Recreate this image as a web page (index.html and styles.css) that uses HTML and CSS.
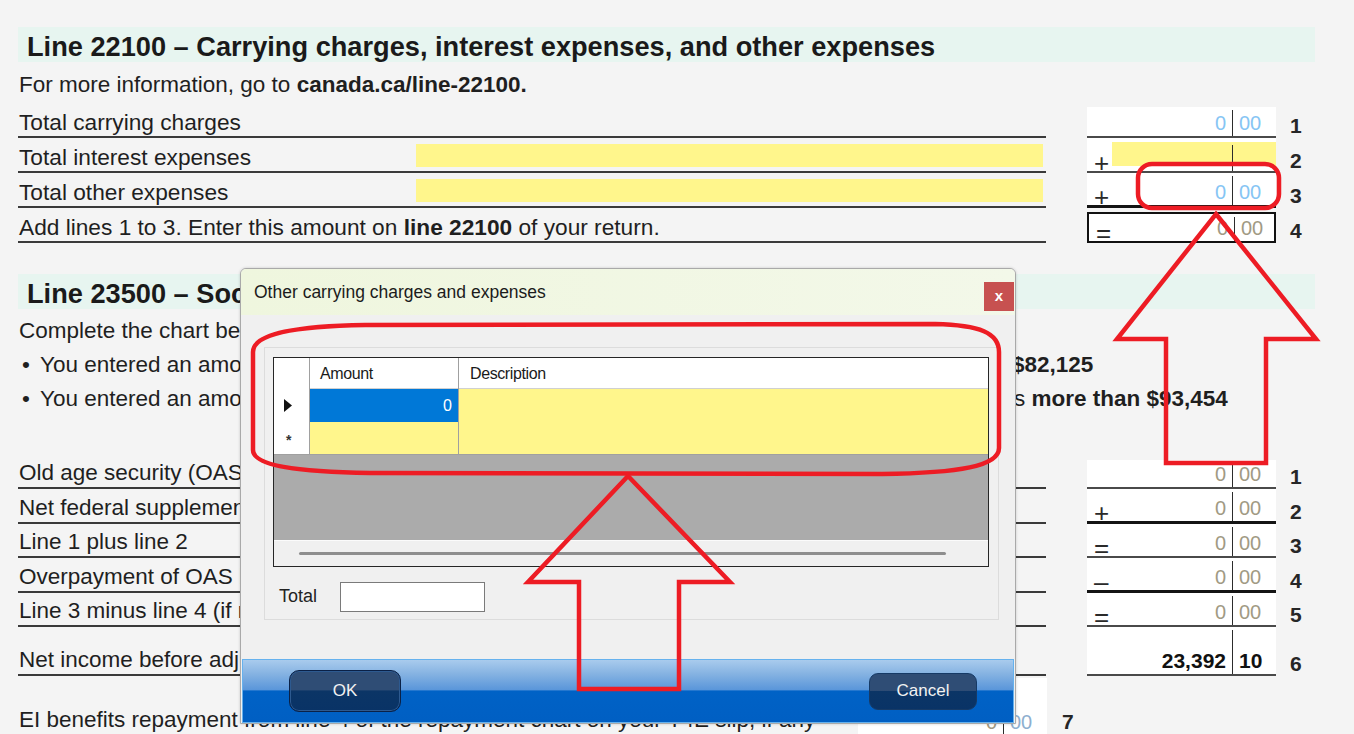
FILE: index.html
```html
<!DOCTYPE html>
<html lang="en">
<head>
<meta charset="utf-8">
<title>Line 22100</title>
<link rel="stylesheet" href="styles.css">
</head>
<body>
<main class="form">
  <section class="sec s1">
    <h2 class="band">Line 22100 – Carrying charges, interest expenses, and other expenses</h2>
    <p class="info">For more information, go to <b>canada.ca/line-22100.</b></p>

    <div class="row">
      <div class="lbl">Total carrying charges</div>
      <div class="amt top4"><span class="op"></span><span class="fld"><span class="dol blue">0</span><span class="sep"></span><span class="cts blue">00</span></span></div>
      <div class="num">1</div>
    </div>
    <div class="row">
      <div class="lbl">Total interest expenses<span class="yel"></span></div>
      <div class="amt"><span class="op">+</span><span class="fld yfld"><span class="dol"></span><span class="sep"></span><span class="cts"></span></span></div>
      <div class="num">2</div>
    </div>
    <div class="row">
      <div class="lbl">Total other expenses<span class="yel"></span></div>
      <div class="amt thick"><span class="op">+</span><span class="fld"><span class="dol blue">0</span><span class="sep"></span><span class="cts blue">00</span></span></div>
      <div class="num">3</div>
    </div>
    <div class="row">
      <div class="lbl">Add lines 1 to 3. Enter this amount on&nbsp;<b>line 22100</b>&nbsp;of your return.</div>
      <div class="amt boxed"><span class="op">=</span><span class="fld"><span class="dol tan">0</span><span class="sep"></span><span class="cts tan">00</span></span></div>
      <div class="num">4</div>
    </div>
  </section>

  <section class="sec s2">
    <h2 class="band">Line 23500 – Social benefits repayment</h2>
    <p class="lead">Complete the chart below if one of the following applies:</p>
    <div class="bul"><span class="dot">•</span><span class="bt w1">You entered an amount on line 11300 or line 14600, and your net income on line 23400 is more than</span><b>$82,125</b></div>
    <div class="bul"><span class="dot">•</span><span class="bt w2">You entered an amount on line 11900, and your net income on line 23400</span><span>is&nbsp;<b>more than $93,454</b></span></div>

    <div class="rows2">
      <div class="row r2">
        <div class="lbl">Old age security (OAS) pension from line 11300</div>
        <div class="amt top5"><span class="op"></span><span class="fld"><span class="dol tan">0</span><span class="sep"></span><span class="cts tan">00</span></span></div>
        <div class="num">1</div>
      </div>
      <div class="row r2">
        <div class="lbl">Net federal supplements paid from line 14600</div>
        <div class="amt thick"><span class="op">+</span><span class="fld"><span class="dol tan">0</span><span class="sep"></span><span class="cts tan">00</span></span></div>
        <div class="num">2</div>
      </div>
      <div class="row r2">
        <div class="lbl">Line 1 plus line 2</div>
        <div class="amt"><span class="op">=</span><span class="fld"><span class="dol tan">0</span><span class="sep"></span><span class="cts tan">00</span></span></div>
        <div class="num">3</div>
      </div>
      <div class="row r2">
        <div class="lbl">Overpayment of OAS benefits recovered</div>
        <div class="amt thick"><span class="op">–</span><span class="fld"><span class="dol tan">0</span><span class="sep"></span><span class="cts tan">00</span></span></div>
        <div class="num">4</div>
      </div>
      <div class="row r2">
        <div class="lbl">Line 3 minus line 4 (if negative, enter "0")</div>
        <div class="amt"><span class="op">=</span><span class="fld"><span class="dol tan">0</span><span class="sep"></span><span class="cts tan">00</span></span></div>
        <div class="num">5</div>
      </div>
      <div class="row r2 tall">
        <div class="lbl">Net income before adjustments from line 23400 of your return</div>
        <div class="amt"><span class="op"></span><span class="fld"><span class="dol strong">23,392</span><span class="sep"></span><span class="cts strong">10</span></span></div>
        <div class="num">6</div>
      </div>
      <div class="row r7">
        <div class="lbl">EI benefits repayment from line 4 of the repayment chart on your T4E slip, if any</div>
        <div class="amt top2"><span class="op"></span><span class="fld"><span class="dol tan">0</span><span class="sep"></span><span class="cts pale">00</span></span></div>
        <div class="num">7</div>
      </div>
    </div>
  </section>
</main>

<div class="dlg">
  <div class="dlg-title">
    <span class="dlg-name">Other carrying charges and expenses</span>
    <span class="xbtn">x</span>
  </div>
  <div class="dlg-body">
    <div class="panel">
      <div class="grid">
        <div class="g-row g-head">
          <div class="rh"></div>
          <div class="c1">Amount</div>
          <div class="c2">Description</div>
        </div>
        <div class="g-row">
          <div class="rh"><svg class="tri" width="8" height="13" viewBox="0 0 8 13"><path d="M0 0 L8 6.5 L0 13 Z" fill="#111"/></svg></div>
          <div class="c1 sel">0</div>
          <div class="c2 cy"></div>
        </div>
        <div class="g-row">
          <div class="rh star">*</div>
          <div class="c1 cy"></div>
          <div class="c2 cy"></div>
        </div>
        <div class="g-empty"></div>
        <div class="g-scroll"><div class="thumb"></div></div>
      </div>
      <div class="total">
        <span class="tlabel">Total</span>
        <span class="tbox"></span>
      </div>
    </div>
  </div>
  <div class="dlg-bar">
    <span class="btn ok">OK</span>
    <span class="btn cancel">Cancel</span>
  </div>
</div>

<svg class="marks" width="1354" height="734" viewBox="0 0 1354 734">
  <g fill="none" stroke="#ed1c24" stroke-width="4.5" stroke-linejoin="miter">
    <rect x="1138" y="164" width="141" height="44" rx="14" ry="14"/>
    <polygon points="1216,214 1316,339 1266,339 1266,463 1166,463 1166,339 1117,339"/>
    <path d="M253,352 C253,333 300,326 365,325 L935,324 C980,325 999,333 999,352 L999,448 C999,466 960,473 882,474 L370,473 C300,472 253,466 253,450 Z"/>
    <polygon points="628,476 730,582 679,582 679,689 579,689 579,582 528,582"/>
  </g>
</svg>
</body>
</html>
```

FILE: styles.css
```css
* { box-sizing: border-box; }

html, body {
  margin: 0;
  padding: 0;
}

body {
  position: relative;
  width: 1354px;
  height: 734px;
  overflow: hidden;
  background: #f4f4f4;
  font-family: "Liberation Sans", Arial, sans-serif;
  color: #1f1f1f;
}

.form {
  padding: 27px 0 0 18px;
}

.band {
  margin: 0;
  width: 1297px;
  height: 35px;
  background: #e7f5f0;
  padding: 3px 0 0 9px;
  font-size: 27.2px;
  line-height: 33px;
  font-weight: bold;
  color: #1a1a1a;
  white-space: nowrap;
  overflow: hidden;
}

.info {
  margin: 5px 0 0 1px;
  height: 36px;
  line-height: 36px;
  font-size: 22.5px;
}

.row {
  display: grid;
  grid-template-columns: 1028px 41px 189px 1fr;
  height: 35px;
}

.lbl {
  display: flex;
  align-items: flex-end;
  border-bottom: 2px solid #3a3a3a;
  padding: 0 0 1px 1px;
  font-size: 22.7px;
  line-height: 26px;
  white-space: nowrap;
  overflow: hidden;
}

.lbl .yel {
  align-self: flex-start;
  margin: 6px 3px 0 auto;
  width: 627px;
  height: 23px;
  flex: none;
  background: #fff68c;
}

.amt {
  grid-column: 3;
  display: flex;
  background: #fff;
  border-bottom: 2px solid #4a4a4a;
}

.amt.top4 { margin-top: 4px; }
.amt.top5 { margin-top: 5.5px; }
.amt.top2 { margin-top: 2px; }
.amt.thick { border-bottom: 3px solid #141414; }
.amt.boxed {
  margin-top: 4px;
  border: 2px solid #111;
}

.op {
  flex: none;
  width: 25px;
  align-self: flex-end;
  padding-left: 7px;
  margin-bottom: -3px;
  font-size: 26px;
  line-height: 22px;
  color: #2a2a2a;
}

.fld {
  flex: 1;
  display: grid;
  grid-template-columns: 120px 1px 1fr;
}

.yfld {
  background: linear-gradient(#fff68c, #fff68c) top left / 100% calc(100% - 5px) no-repeat;
  margin-top: 4px;
}

.dol, .cts {
  align-self: end;
  font-size: 20px;
  line-height: 24px;
  padding-bottom: 1px;
}

.dol {
  text-align: right;
  padding-right: 6px;
}

.cts {
  padding-left: 6px;
}

.sep {
  background: #2c2c2c;
  margin-top: 3px;
}

.blue { color: #86c5f4; }
.tan { color: #a19a84; }
.pale { color: #8eafcf; }
.strong { color: #111; font-weight: bold; font-size: 21px; }

.num {
  grid-column: 4;
  align-self: end;
  padding-left: 14px;
  font-size: 21px;
  line-height: 24px;
  font-weight: bold;
  color: #262626;
}

/* section 2 */
.s2 { margin-top: 31px; }

.lead {
  margin: 5px 0 0 1px;
  height: 34px;
  line-height: 34px;
  font-size: 22.5px;
}

.bul {
  display: flex;
  height: 34px;
  line-height: 34px;
  font-size: 22.5px;
  white-space: nowrap;
}

.dot {
  flex: none;
  width: 22px;
  padding-left: 4px;
}

.bt {
  flex: none;
  overflow: hidden;
}
.bt.w1 { width: 972px; }
.bt.w2 { width: 969px; }

.rows2 { margin-top: 38.5px; }

.row.r2 { height: 34.5px; }
.row.r2 .lbl { font-size: 22.5px; }
.row.tall { height: 49px; }
.row.r7 {
  grid-template-columns: 840px 189px 1fr;
  height: 60px;
}
.row.r7 .lbl { border-bottom: none; padding-bottom: 3px; font-size: 22.5px; }
.row.r7 .amt { grid-column: 2; border-bottom: none; }
.row.r7 .amt .fld { padding-bottom: 2px; }
.row.r7 .num { grid-column: 3; padding-left: 15px; padding-bottom: 2px; }
.row.r7 .dol, .row.r7 .cts { padding-bottom: 0; }

/* dialog */
.dlg {
  position: absolute;
  left: 240px;
  top: 268px;
  width: 776px;
  height: 456px;
  display: flex;
  flex-direction: column;
  border: 1px solid #a9a9a9;
  border-radius: 6px 6px 0 0;
  background: #f0f0f0;
  box-shadow: 0 0 3px rgba(0,0,0,0.18);
  font-family: "Liberation Sans", Arial, sans-serif;
  z-index: 5;
}

.dlg-title {
  height: 46px;
  flex: none;
  display: flex;
  align-items: flex-start;
  background: linear-gradient(to right, #eff6de, #f3f8e9);
  border-radius: 5px 5px 0 0;
}

.dlg-name {
  padding-left: 13px;
  line-height: 46px;
  font-size: 17.5px;
  color: #1b1b1b;
}

.xbtn {
  margin: 13px 1px 0 auto;
  width: 30px;
  height: 29px;
  background: #c75150;
  color: #fff;
  font-weight: bold;
  font-size: 15px;
  line-height: 28px;
  text-align: center;
}

.dlg-body {
  flex: 1;
  padding: 32px 0 0 23px;
}

.panel {
  width: 735px;
  height: 273px;
  border: 1px solid #dcdcdc;
  padding: 9px 0 0 8px;
}

.grid {
  width: 716px;
  height: 210px;
  border: 1px solid #262626;
  display: flex;
  flex-direction: column;
  background: #ababab;
  font-size: 16px;
  color: #1a1a1a;
}

.g-row {
  display: grid;
  grid-template-columns: 36px 149px 1fr;
  height: 33px;
  flex: none;
  border-bottom: 1px solid #a0a0a0;
  background: #fff;
}

.g-row.g-head {
  height: 31px;
  border-bottom: 1px solid #d0d0d0;
}

.g-row > div {
  border-right: 1px solid #a0a0a0;
}
.g-row > div:last-child { border-right: none; }

.g-head .c1, .g-head .c2 {
  line-height: 31px;
  padding-left: 10px;
  letter-spacing: -0.4px;
}
.g-head .c2 { padding-left: 11px; }

.rh {
  display: flex;
  align-items: center;
  padding-left: 10px;
  background: #fff;
}

.rh.star {
  font-weight: bold;
  font-size: 14px;
  padding-left: 12px;
  padding-top: 4px;
  color: #333;
}

.c1.sel {
  background: #0078d7;
  color: #fff;
  text-align: right;
  padding-right: 6px;
  line-height: 33px;
  font-size: 16px;
}

.cy { background: #fff68c; }

.g-empty {
  flex: 1;
  background: #ababab;
}

.g-scroll {
  flex: none;
  height: 26px;
  background: #f0f0f0;
  border-top: 1px solid #fbfbfb;
  padding: 11px 42px 0 25px;
}

.thumb {
  height: 3px;
  border-radius: 2px;
  background: #8e8e8e;
}

.total {
  display: flex;
  align-items: center;
  margin-top: 15px;
  padding-left: 6px;
}

.tlabel {
  width: 61px;
  font-size: 18px;
  color: #222;
  padding-bottom: 2px;
}

.tbox {
  width: 145px;
  height: 30px;
  background: #fff;
  border: 1px solid #7a7a7a;
}

.dlg-bar {
  flex: none;
  height: 64px;
  margin: 0 1px;
  border: 1px solid #66b2ee;
  background: linear-gradient(to bottom, #a9cbed 0%, #86b3e2 22%, #5a96da 48%, #0062c6 50%, #005fc3 100%);
  display: flex;
  align-items: center;
  justify-content: space-between;
  padding: 0 36px 0 46px;
}

.btn {
  display: flex;
  align-items: center;
  justify-content: center;
  color: #f2f2f2;
  font-size: 17px;
  background: linear-gradient(to bottom, #2f4d75 0%, #2f4d75 47%, #0b3566 50%, #093366 100%);
}

.btn.ok {
  width: 112px;
  height: 42px;
  border-radius: 10px;
  border: 1px solid #0a2147;
  box-shadow: inset 0 0 0 1px #2d5a90;
}

.btn.cancel {
  width: 108px;
  height: 37px;
  border-radius: 9px;
  border: 1px solid #163a66;
}

.marks {
  position: absolute;
  left: 0;
  top: 0;
  z-index: 10;
  pointer-events: none;
}
```
